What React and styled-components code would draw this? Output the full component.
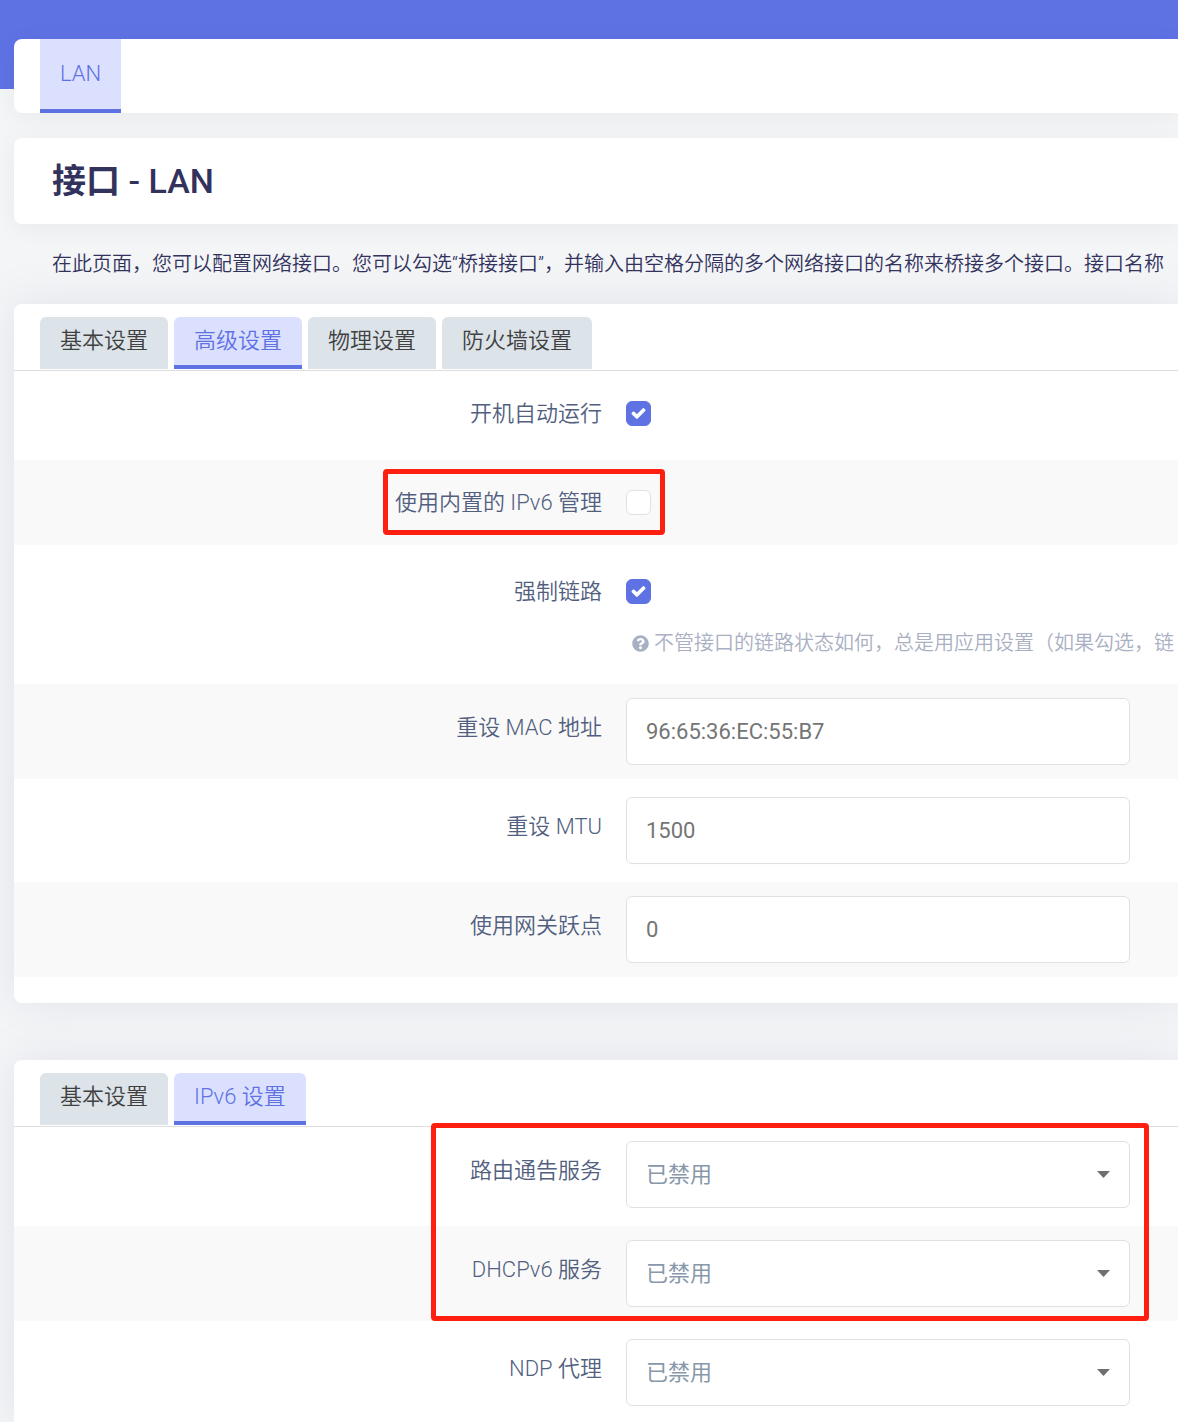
import React from 'react';
import styled, { createGlobalStyle } from 'styled-components';
import { FaCheck, FaQuestionCircle } from 'react-icons/fa';

const GlobalStyle = createGlobalStyle`
  * {
    box-sizing: border-box;
  }
  body {
    margin: 0;
    background: #f4f5f7;
    font-family: Roboto, 'Noto Sans CJK SC', sans-serif;
    font-size: 22px;
    font-weight: 350;
    color: #525f7f;
  }
  input, select {
    font: inherit;
  }
`;

const Page = styled.div`
  display: flex;
  flex-direction: column;
  min-height: 100vh;
  overflow: hidden;
`;

const Banner = styled.header`
  height: 89px;
  background: #5e72e4;
`;

const Main = styled.main`
  flex: 1;
  display: flex;
  flex-direction: column;
  margin-top: -50px;
  padding-left: 14px;
`;

const Card = styled.section`
  border-radius: 8px 0 0 8px;
  background: #fff;
  box-shadow: 0 4px 24px rgba(0, 0, 0, 0.05);
`;

const NavCard = styled(Card)`
  display: flex;
  margin-bottom: 25px;
  padding-left: 26px;
`;

const NavTab = styled.a`
  height: 74px;
  padding: 0 20px;
  border-bottom: 4px solid #5e72e4;
  background: #dce0ff;
  color: #5e72e4;
  line-height: 70px;
  text-decoration: none;
`;

const TitleCard = styled(Card)`
  padding: 0 38px;
`;

const Title = styled.h2`
  margin: 0;
  color: #32325d;
  font-size: 34px;
  font-weight: 700;
  line-height: 86px;
`;

const TitleName = styled.span`
  font-weight: 500;
`;

const Description = styled.p`
  margin: 0;
  padding-left: 38px;
  color: #32325d;
  font-size: 20px;
  line-height: 80px;
  white-space: nowrap;
`;

const SettingsCard = styled(Card)`
  margin-bottom: 57px;
  padding: 13px 0 26px;
  box-shadow: 0 0 44px rgba(136, 152, 170, 0.18);

  &:last-child {
    flex: 1;
    margin-bottom: 0;
    padding-bottom: 0;
    border-bottom-left-radius: 0;
  }
`;

const Tabs = styled.nav`
  display: flex;
  gap: 6px;
  padding: 0 26px 1px;
  border-bottom: 1px solid #dddddd;
`;

const Tab = styled.a`
  height: 52px;
  padding: 0 20px;
  border-bottom: 4px solid ${({ $active }) => ($active ? '#5e72e4' : '#dce3e9')};
  border-radius: 6px 6px 0 0;
  background: ${({ $active }) => ($active ? '#dce0ff' : '#dce3e9')};
  color: ${({ $active }) => ($active ? '#5e72e4' : '#404040')};
  line-height: 48px;
  text-decoration: none;
`;

const Rows = styled.div`
  display: flex;
  flex-direction: column;
  gap: 4px;
`;

const Row = styled.div`
  display: grid;
  grid-template-columns: minmax(0, 1fr) 552px;
  column-gap: 24px;
  padding: 14px 0;
  background: ${({ $shaded }) => ($shaded ? '#f9f9f9' : '#fff')};
`;

const Label = styled.label`
  line-height: ${({ $tall }) => ($tall ? '60px' : '57px')};
  text-align: right;
`;

const CheckWrap = styled.span`
  position: relative;
  display: flex;
  align-items: center;
  height: 57px;

  svg {
    position: absolute;
    left: 6px;
    width: 13px;
    height: 13px;
    overflow: visible;
    color: #fff;
    stroke-width: 40;
    pointer-events: none;
  }
`;

const Checkbox = styled.input`
  appearance: none;
  width: 25px;
  height: 25px;
  margin: 0;
  border: 1px solid #dee2e6;
  border-radius: 6px;
  background: #fff;

  &:checked {
    border-color: #5e72e4;
    background: #5e72e4;
  }
`;

const Hint = styled.div`
  display: flex;
  align-items: center;
  gap: 5px;
  padding-left: 6px;
  color: #a9b0c3;
  font-size: 20px;
  line-height: 46px;
  white-space: nowrap;

  svg {
    flex: none;
    width: 17px;
    height: 17px;
  }
`;

const TextInput = styled.input`
  width: 504px;
  height: 67px;
  padding: 0 19px;
  border: 1px solid #dee2e6;
  border-radius: 6px;
  background: #fff;
  box-shadow: 0 3px 2px rgba(233, 236, 239, 0.05);
  font-weight: 400;

  &::placeholder {
    color: #757575;
    opacity: 1;
  }
`;

const SelectWrap = styled.span`
  position: relative;
  display: block;
  width: 504px;

  svg {
    position: absolute;
    top: 30px;
    right: 20px;
    pointer-events: none;
  }
`;

const Select = styled.select`
  appearance: none;
  display: block;
  width: 100%;
  height: 67px;
  padding: 0 19px;
  border: 1px solid #dee2e6;
  border-radius: 6px;
  background: #fff;
  color: #8898aa;
  font-weight: 400;
`;

const Marked = styled(Rows)`
  position: relative;
`;

const Marker = styled.span`
  position: absolute;
  top: ${({ $top }) => $top}px;
  right: ${({ $right }) => $right}px;
  width: ${({ $width }) => $width}px;
  height: ${({ $height }) => $height}px;
  border: 5px solid #ff1f10;
  border-radius: 4px;
  pointer-events: none;
`;

const CheckRow = ({ id, label, checked, shaded, hint }) => (
  <Row $shaded={shaded}>
    <Label htmlFor={id}>{label}</Label>
    <div>
      <CheckWrap>
        <Checkbox id={id} type="checkbox" defaultChecked={checked} />
        {checked ? <FaCheck /> : null}
      </CheckWrap>
      {hint ? (
        <Hint>
          <FaQuestionCircle />
          {hint}
        </Hint>
      ) : null}
    </div>
  </Row>
);

const TextRow = ({ id, label, placeholder, shaded }) => (
  <Row $shaded={shaded}>
    <Label htmlFor={id} $tall>{label}</Label>
    <TextInput id={id} type="text" placeholder={placeholder} />
  </Row>
);

const SelectRow = ({ id, label, shaded }) => (
  <Row $shaded={shaded}>
    <Label htmlFor={id} $tall>{label}</Label>
    <SelectWrap>
      <Select id={id} defaultValue="disabled">
        <option value="disabled">已禁用</option>
      </Select>
      <svg width="13" height="7" viewBox="0 0 13 7">
        <path d="M0 0h13L6.5 7z" fill="#6f6f6f" />
      </svg>
    </SelectWrap>
  </Row>
);

const TabBar = ({ items, active }) => (
  <Tabs>
    {items.map((item) => (
      <Tab key={item} href="#" $active={item === active}>{item}</Tab>
    ))}
  </Tabs>
);

const App = () => (
  <>
    <GlobalStyle />
    <Page>
      <Banner />
      <Main>
        <NavCard as="nav">
          <NavTab href="#">LAN</NavTab>
        </NavCard>
        <TitleCard>
          <Title>接口 <TitleName>- LAN</TitleName></Title>
        </TitleCard>
        <Description>
          在此页面，您可以配置网络接口。您可以勾选“桥接接口”，并输入由空格分隔的多个网络接口的名称来桥接多个接口。接口名称
        </Description>

        <SettingsCard>
          <TabBar items={['基本设置', '高级设置', '物理设置', '防火墙设置']} active="高级设置" />
          <Rows>
            <CheckRow id="auto" label="开机自动运行" checked />
            <Marked>
              <CheckRow id="delegate" label="使用内置的 IPv6 管理" shaded />
              <Marker $top={9} $right={513} $width={282} $height={66} />
            </Marked>
            <CheckRow
              id="force_link"
              label="强制链路"
              checked
              hint="不管接口的链路状态如何，总是用应用设置（如果勾选，链"
            />
            <TextRow id="macaddr" label="重设 MAC 地址" placeholder="96:65:36:EC:55:B7" shaded />
            <TextRow id="mtu" label="重设 MTU" placeholder="1500" />
            <TextRow id="metric" label="使用网关跃点" placeholder="0" shaded />
          </Rows>
        </SettingsCard>

        <SettingsCard>
          <TabBar items={['基本设置', 'IPv6 设置']} active="IPv6 设置" />
          <Rows>
            <Marked>
              <SelectRow id="ra" label="路由通告服务" />
              <SelectRow id="dhcpv6" label="DHCPv6 服务" shaded />
              <Marker $top={-4} $right={29} $width={718} $height={198} />
            </Marked>
            <SelectRow id="ndp" label="NDP 代理" />
          </Rows>
        </SettingsCard>
      </Main>
    </Page>
  </>
);

export default App;
